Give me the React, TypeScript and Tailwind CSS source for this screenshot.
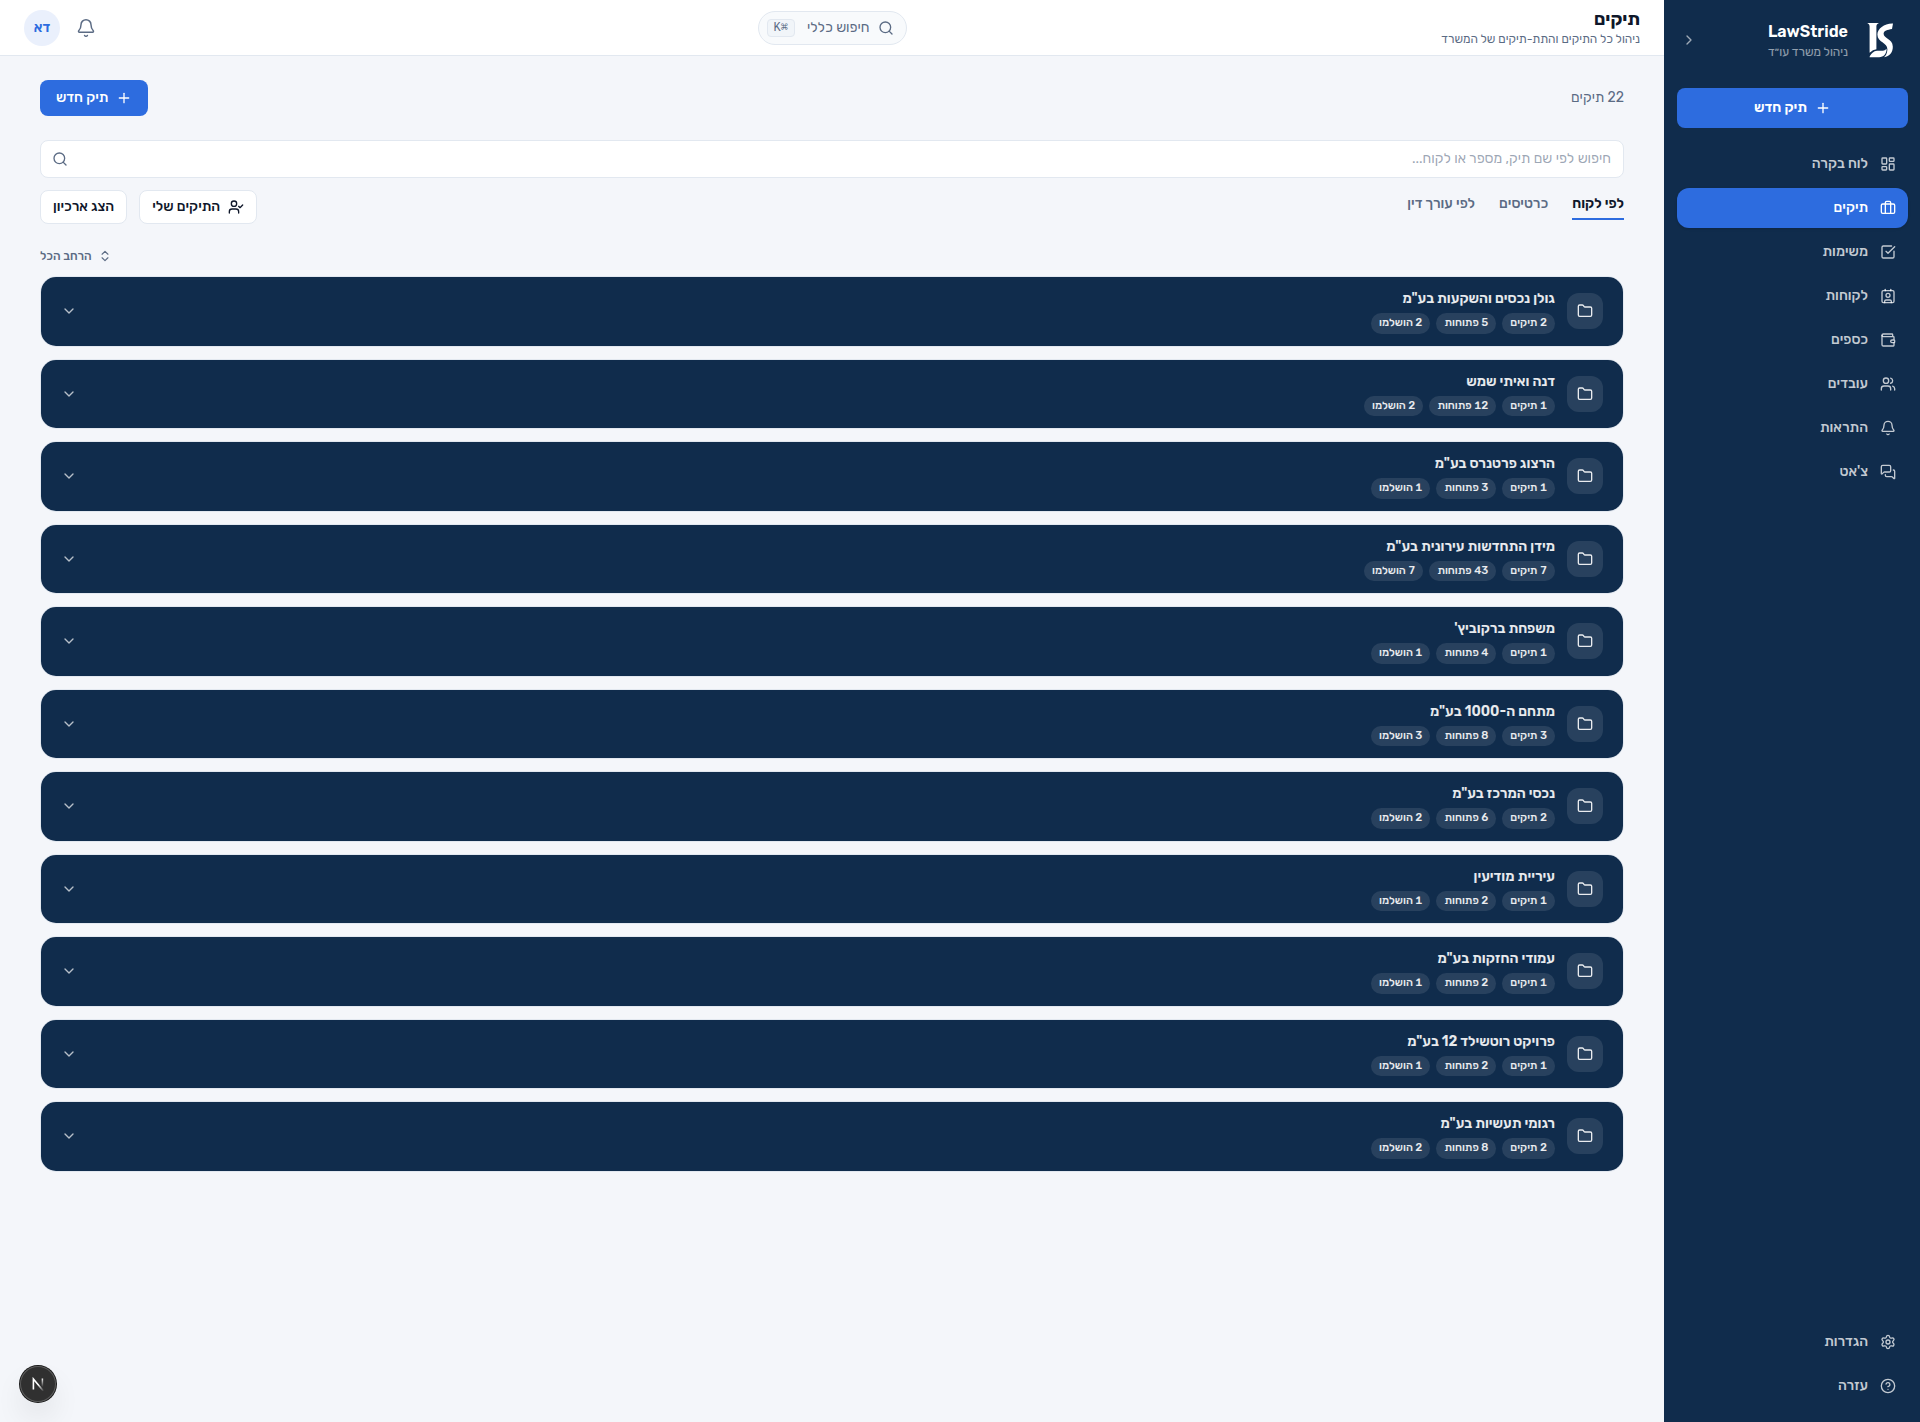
import {
  Bell,
  Briefcase,
  ChevronDown,
  ChevronRight,
  ChevronsUpDown,
  CircleQuestionMark,
  Contact,
  Folder,
  LayoutDashboard,
  MessagesSquare,
  Plus,
  Search,
  Settings,
  SquareCheckBig,
  UserCheck,
  Users,
  Wallet,
  type LucideIcon,
} from 'lucide-react';

type NavEntry = { label: string; icon: LucideIcon; active?: boolean };

const mainNav: NavEntry[] = [
  { label: 'לוח בקרה', icon: LayoutDashboard },
  { label: 'תיקים', icon: Briefcase, active: true },
  { label: 'משימות', icon: SquareCheckBig },
  { label: 'לקוחות', icon: Contact },
  { label: 'כספים', icon: Wallet },
  { label: 'עובדים', icon: Users },
  { label: 'התראות', icon: Bell },
  { label: "צ'אט", icon: MessagesSquare },
];

const footerNav: NavEntry[] = [
  { label: 'הגדרות', icon: Settings },
  { label: 'עזרה', icon: CircleQuestionMark },
];

const clients = [
  { name: 'גולן נכסים והשקעות בע"מ', cases: 2, open: 5, done: 2 },
  { name: 'דנה ואיתי שמש', cases: 1, open: 12, done: 2 },
  { name: 'הרצוג פרטנרס בע"מ', cases: 1, open: 3, done: 1 },
  { name: 'מידן התחדשות עירונית בע"מ', cases: 7, open: 43, done: 7 },
  { name: "משפחת ברקוביץ'", cases: 1, open: 4, done: 1 },
  { name: 'מתחם ה-1000 בע"מ', cases: 3, open: 8, done: 3 },
  { name: 'נכסי המרכז בע"מ', cases: 2, open: 6, done: 2 },
  { name: 'עיריית מודיעין', cases: 1, open: 2, done: 1 },
  { name: 'עמודי החזקות בע"מ', cases: 1, open: 2, done: 1 },
  { name: 'פרויקט רוטשילד 12 בע"מ', cases: 1, open: 2, done: 1 },
  { name: 'רגומי תעשיות בע"מ', cases: 2, open: 8, done: 2 },
];

function BrandMark() {
  return (
    <svg viewBox="0 0 40 40" className="size-10 shrink-0" fill="#ffffff" aria-hidden="true">
      <path d="M7.2 3H19C17 4 16.4 4.9 16.4 6.4V29.2C14 29.6 12 30.6 9.6 32.8V6.4C9.6 4.9 9 4 7.2 3Z" />
      <path d="M33 3.4C24.6 3 17.4 8.6 17.4 14.6C17.4 22.6 27.6 22.6 27.4 29.4C27.2 33.2 25.6 36 24 37.2C29.6 36.6 33 32.2 32.8 26.6C32.6 18.6 23.4 18.8 23.6 13.6C23.8 10.8 27.4 9.8 32 9Z" />
      <path d="M9.6 36.8C12.4 31.4 15.4 30.6 19.2 30.8C22.4 31 24.8 30.8 26.6 28.8C26.6 34.2 23.4 37.2 19.2 37.2H9.6Z" />
    </svg>
  );
}

function NavLink({ label, icon: Icon, active }: NavEntry) {
  return (
    <a
      href="#"
      aria-current={active ? 'page' : undefined}
      className={
        active
          ? 'flex h-10 items-center gap-3 rounded-xl bg-[#2d6cdf] px-3 text-sm font-medium text-white shadow-sm'
          : 'flex h-10 items-center gap-3 rounded-xl px-3 text-sm font-medium text-white/75'
      }
    >
      <Icon className="size-4 shrink-0" />
      {label}
    </a>
  );
}

function Sidebar() {
  return (
    <aside className="flex w-64 shrink-0 flex-col border-l border-[#102c4c] bg-[#102c4c]">
      <div className="flex h-20 items-center justify-between px-5">
        <div className="flex items-center gap-3">
          <BrandMark />
          <div>
            <div className="text-base leading-6 font-semibold text-white">LawStride</div>
            <div className="text-xs text-white/55">ניהול משרד עו״ד</div>
          </div>
        </div>
        <button type="button" aria-label="כיווץ תפריט" className="-ml-3 flex size-8 items-center justify-center text-white/60">
          <ChevronRight className="size-4" />
        </button>
      </div>
      <div className="px-3 pt-2 pb-4">
        <button
          type="button"
          className="flex h-10 w-full items-center justify-center gap-2 rounded-lg bg-[#2d6cdf] text-sm font-semibold text-white"
        >
          <Plus className="size-4" />
          תיק חדש
        </button>
      </div>
      <nav aria-label="ראשי" className="flex flex-1 flex-col gap-1 px-3">
        {mainNav.map((item) => (
          <NavLink key={item.label} {...item} />
        ))}
      </nav>
      <nav aria-label="משני" className="flex flex-col gap-1 px-3 pb-4">
        {footerNav.map((item) => (
          <NavLink key={item.label} {...item} />
        ))}
      </nav>
    </aside>
  );
}

function TopBar() {
  return (
    <header className="grid h-14 grid-cols-[1fr_auto_1fr] items-center border-b border-[#e2e8f0] bg-white px-6">
      <div>
        <h1 className="text-lg leading-tight font-bold text-[#0f172a]">תיקים</h1>
        <p className="text-xs leading-4 text-[#5b6b84]">ניהול כל התיקים והתת-תיקים של המשרד</p>
      </div>
      <button
        type="button"
        className="flex items-center gap-2 rounded-full border border-[#e2e8f0] bg-[#f8fafc] py-1.5 pr-3 pl-2 text-sm text-[#5b6b84]"
      >
        <Search className="size-4" />
        <span className="leading-5">חיפוש כללי</span>
        <kbd className="mr-1 rounded border border-[#e2e8f0] bg-[#f1f5f9] px-1.5 font-mono text-xs leading-4">⌘K</kbd>
      </button>
      <div className="flex items-center justify-end gap-2">
        <button type="button" aria-label="התראות" className="flex size-9 items-center justify-center text-[#5b6b84]">
          <Bell className="size-5" strokeWidth={1.75} />
        </button>
        <button
          type="button"
          className="flex size-9 items-center justify-center rounded-full bg-[#eaf0fc] text-sm font-semibold text-[#2d6cdf]"
        >
          דא
        </button>
      </div>
    </header>
  );
}

function Tab({ label, active }: { label: string; active?: boolean }) {
  return (
    <button
      type="button"
      role="tab"
      aria-selected={!!active}
      className={
        active
          ? 'border-b-2 border-[#2d6cdf] py-1 text-sm font-semibold text-[#0f172a]'
          : 'border-b-2 border-transparent py-1 text-sm font-medium text-[#5b6b84]'
      }
    >
      {label}
    </button>
  );
}

function Badge({ children }: { children: string }) {
  return (
    <span className="rounded-full bg-white/10 px-2 py-0.5 text-[11px] leading-normal font-medium text-white/90 tabular-nums">
      {children}
    </span>
  );
}

function ClientCard({ name, cases, open, done }: (typeof clients)[number]) {
  return (
    <li className="overflow-hidden rounded-2xl border border-[#e2e8f0]">
      <button type="button" aria-expanded="false" className="flex w-full items-center gap-3 bg-[#102c4c] px-5 py-3 text-right">
        <span className="flex size-9 shrink-0 items-center justify-center rounded-xl bg-white/10 text-white/90">
          <Folder className="size-4" />
        </span>
        <span className="flex flex-1 flex-col gap-1">
          <span className="text-sm font-semibold text-white/90">{name}</span>
          <span className="flex gap-1.5">
            <Badge>{`${cases} תיקים`}</Badge>
            <Badge>{`${open} פתוחות`}</Badge>
            <Badge>{`${done} הושלמו`}</Badge>
          </span>
        </span>
        <ChevronDown className="size-4 shrink-0 text-white/70" />
      </button>
    </li>
  );
}

function DevBadge() {
  return (
    <button
      type="button"
      aria-label="כלי פיתוח"
      className="fixed bottom-5 left-5 flex size-9 items-center justify-center rounded-full bg-[#303030] shadow-[0_0_0_1px_#171717,inset_0_0_0_1px_#5c5c5c,0_16px_32px_-8px_rgba(0,0,0,0.24)]"
    >
      <svg viewBox="0 0 14 14" className="size-3.5" fill="none" aria-hidden="true">
        <defs>
          <linearGradient id="dev-diagonal" x1="7" y1="8" x2="13" y2="14" gradientUnits="userSpaceOnUse">
            <stop stopColor="#ffffff" />
            <stop offset="1" stopColor="#ffffff" stopOpacity="0" />
          </linearGradient>
          <linearGradient id="dev-stem" x1="11" y1="1" x2="11" y2="10" gradientUnits="userSpaceOnUse">
            <stop stopColor="#ffffff" />
            <stop offset="1" stopColor="#ffffff" stopOpacity="0" />
          </linearGradient>
        </defs>
        <path d="M2.4 12.5V2L12.4 14" stroke="url(#dev-diagonal)" strokeWidth="1.6" />
        <path d="M11.4 1.5V11" stroke="url(#dev-stem)" strokeWidth="1.5" />
      </svg>
    </button>
  );
}

export default function App() {
  return (
    <div
      dir="rtl"
      className="flex min-h-screen bg-[#f4f6fa] font-[Rubik,'Open_Sans','Noto_Sans',sans-serif] text-[#0f172a] antialiased"
    >
      <Sidebar />
      <div className="flex min-w-0 flex-1 flex-col">
        <TopBar />
        <main className="flex flex-1 flex-col px-10 py-6">
          <div className="flex items-center justify-between">
            <p className="text-sm text-[#5b6b84]">22 תיקים</p>
            <button
              type="button"
              className="flex h-9 items-center gap-2 rounded-lg bg-[#2d6cdf] px-4 text-sm font-medium text-white"
            >
              <Plus className="size-4" />
              תיק חדש
            </button>
          </div>
          <div className="relative mt-6 flex">
            <input
              type="search"
              aria-label="חיפוש תיקים"
              placeholder="חיפוש לפי שם תיק, מספר או לקוח..."
              className="min-w-0 flex-1 rounded-lg border border-[#e2e8f0] bg-white py-2 pr-3 pl-10 text-sm leading-5 outline-none placeholder:text-[#5b6b84]/60"
            />
            <Search className="pointer-events-none absolute inset-y-0 left-3 my-auto size-4 text-[#5b6b84]" />
          </div>
          <div className="mt-3 flex items-start justify-between">
            <div role="tablist" className="flex gap-6">
              <Tab label="לפי לקוח" active />
              <Tab label="כרטיסים" />
              <Tab label="לפי עורך דין" />
            </div>
            <div className="flex gap-3">
              <button
                type="button"
                className="flex items-center gap-2 rounded-lg border border-[#e2e8f0] bg-white px-3 py-1.5 text-sm font-medium"
              >
                <UserCheck className="size-4" />
                התיקים שלי
              </button>
              <button
                type="button"
                className="rounded-lg border border-[#e2e8f0] bg-white px-3 py-1.5 text-sm font-medium"
              >
                הצג ארכיון
              </button>
            </div>
          </div>
          <div className="mt-6 mb-3 flex justify-end">
            <button type="button" className="flex items-center gap-1.5 text-xs font-medium text-[#5b6b84]">
              <ChevronsUpDown className="size-3.5" />
              הרחב הכל
            </button>
          </div>
          <ul className="flex flex-col gap-3">
            {clients.map((client) => (
              <ClientCard key={client.name} {...client} />
            ))}
          </ul>
        </main>
      </div>
      <DevBadge />
    </div>
  );
}
